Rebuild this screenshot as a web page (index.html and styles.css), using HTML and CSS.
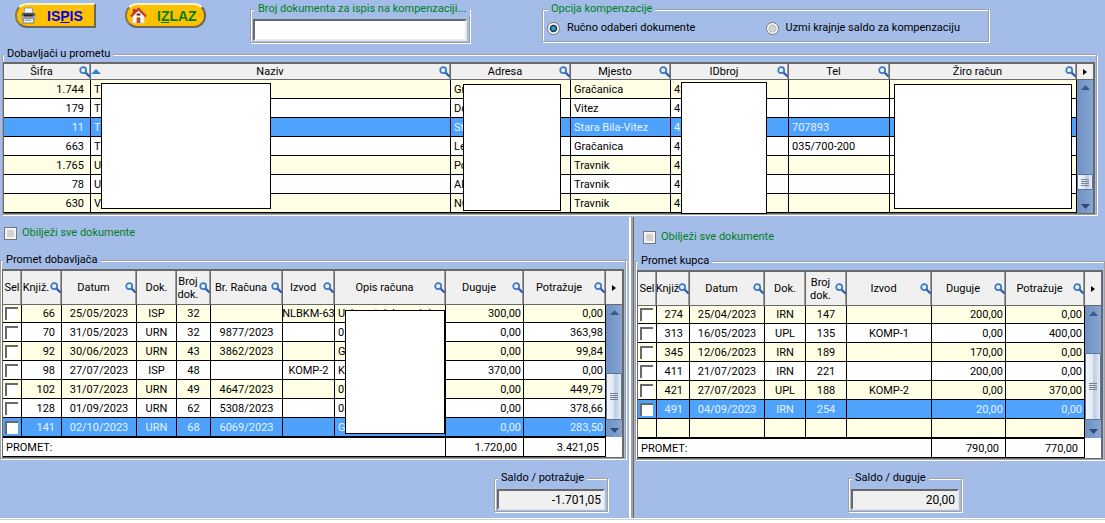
FILE: index.html
```html
<!DOCTYPE html>
<html lang="hr">
<head>
<meta charset="utf-8">
<title>Kompenzacije</title>
<link rel="stylesheet" href="styles.css">
</head>
<body>
<svg class="defs" aria-hidden="true">
  <symbol id="mag" viewBox="0 0 11 11">
    <path d="M6.4 6.4L10 10" stroke="#2f5fae" stroke-width="2.2" stroke-linecap="round"/>
    <circle cx="4.2" cy="4.2" r="3" fill="#e4f2ff" stroke="#3b78c4" stroke-width="1.7"/>
  </symbol>
  <symbol id="up" viewBox="0 0 9 5"><path d="M0 5L4.5 0L9 5Z" fill="#3f5787"/></symbol>
  <symbol id="down" viewBox="0 0 9 5"><path d="M0 0L4.5 5L9 0Z" fill="#2f4675"/></symbol>
</svg>
<main class="app">
  <header class="toolbar">
    <div class="actions">
      <button class="pill print" type="button" accesskey="p">
        <svg viewBox="0 0 18 18" aria-hidden="true">
          <path d="M5 1h8l1 7H4z" fill="#f4f8fc" stroke="#8a98a8"/>
          <path d="M2 7l2-1h10l2 1 1 6H1z" fill="#55585e"/>
          <path d="M1 9h16v4H1z" fill="#a9adb3"/>
          <path d="M4 8h10v2H4z" fill="#222"/>
          <path d="M4 12h10l1 5H3z" fill="#f0f0f0" stroke="#777"/>
          <path d="M5 14h7" stroke="#3a8fd0"/>
        </svg>
        <span>IS<u>P</u>IS</span>
      </button>
      <button class="pill exit" type="button" accesskey="z">
        <svg viewBox="0 0 18 18" aria-hidden="true">
          <path d="M3 2h3v5H3z" fill="#b33"/>
          <path d="M3 9l6-6 6 6v8H3z" fill="#fffaf2" stroke="#d8cbb8"/>
          <path d="M1 10l8-8 8 8" fill="none" stroke="#c9362b" stroke-width="2.4"/>
          <path d="M7 11h4v6H7z" fill="#b0502c"/>
          <path d="M7 7h4v2H7z" fill="#3d2a22"/>
        </svg>
        <span>I<u>Z</u>LAZ</span>
      </button>
    </div>
    <fieldset class="group doc-group">
      <legend class="green"><label for="doc">Broj dokumenta za ispis na kompenzaciji...</label></legend>
      <input class="field" id="doc" type="text">
    </fieldset>
    <fieldset class="group option-group">
      <legend class="green">Opcija kompenzacije</legend>
      <label class="option"><input type="radio" name="opt" checked>Ručno odaberi dokumente</label>
      <label class="option"><input type="radio" name="opt">Uzmi krajnje saldo za kompenzaciju</label>
    </fieldset>
  </header>

  <fieldset class="group suppliers">
    <legend>Dobavljači u prometu</legend>
    <div class="grid">
      <table>
        <colgroup><col class="w87"><col><col class="w120"><col class="w100"><col class="w118"><col class="w101"><col class="w187"></colgroup>
        <thead><tr>
          <th><div class="h"><span>Šifra</span><svg class="mag"><use href="#mag"/></svg></div></th>
          <th><div class="h"><svg class="sort" viewBox="0 0 10 5"><path d="M0 5L5 0L10 5Z" fill="#2f86cf"/></svg><span>Naziv</span><svg class="mag"><use href="#mag"/></svg></div></th>
          <th><div class="h"><span>Adresa</span><svg class="mag"><use href="#mag"/></svg></div></th>
          <th><div class="h"><span>Mjesto</span><svg class="mag"><use href="#mag"/></svg></div></th>
          <th><div class="h"><span>IDbroj</span><svg class="mag"><use href="#mag"/></svg></div></th>
          <th><div class="h"><span>Tel</span><svg class="mag"><use href="#mag"/></svg></div></th>
          <th><div class="h"><span>Žiro račun</span><svg class="mag"><use href="#mag"/></svg></div></th>
        </tr></thead>
        <tbody>
          <tr><td class="n wide">1.744</td><td class="host">T<div class="cover c-name"></div></td><td class="host">Gr<div class="cover c-addr"></div></td><td>Gračanica</td><td class="host">42<div class="cover c-id"></div></td><td></td><td class="host"><div class="cover c-acc"></div></td></tr>
          <tr class="w"><td class="n wide">179</td><td>T</td><td>Do</td><td>Vitez</td><td>42</td><td></td><td></td></tr>
          <tr class="sel"><td class="n wide">11</td><td>T</td><td>St</td><td>Stara Bila-Vitez</td><td>42</td><td>707893</td><td></td></tr>
          <tr class="w"><td class="n wide">663</td><td>T</td><td>Le</td><td>Gračanica</td><td>42</td><td>035/700-200</td><td></td></tr>
          <tr><td class="n wide">1.765</td><td>U</td><td>Po</td><td>Travnik</td><td>42</td><td></td><td></td></tr>
          <tr class="w"><td class="n wide">78</td><td>U</td><td>Al</td><td>Travnik</td><td>42</td><td></td><td></td></tr>
          <tr><td class="n wide">630</td><td>V</td><td>NO</td><td>Travnik</td><td>42</td><td></td><td></td></tr>
        </tbody>
      </table>
      <div class="rail">
        <div class="corner"><svg viewBox="0 0 4 6"><path d="M0 0L4 3L0 6Z"/></svg></div>
        <div class="track"><svg class="arrow"><use href="#up"/></svg><div class="thumb t-top"></div><svg class="arrow"><use href="#down"/></svg></div>
      </div>
    </div>
  </fieldset>

  <div class="panels">
    <section class="panel left">
      <label class="check-all"><input class="box" type="checkbox">Obilježi sve dokumente</label>
      <fieldset class="group">
        <legend>Promet dobavljača</legend>
        <div class="grid tall">
          <table>
            <colgroup><col class="w19"><col class="w40"><col class="w75"><col class="w40"><col class="w34"><col class="w72"><col class="w52"><col><col class="w78"><col class="w82"></colgroup>
            <thead><tr>
              <th><div class="h"><span>Sel</span></div></th>
              <th><div class="h"><span>Knjiž.</span><svg class="mag"><use href="#mag"/></svg></div></th>
              <th><div class="h"><span>Datum</span><svg class="mag"><use href="#mag"/></svg></div></th>
              <th><div class="h"><span>Dok.</span></div></th>
              <th><div class="h"><span>Broj<br>dok.</span><svg class="mag"><use href="#mag"/></svg></div></th>
              <th><div class="h"><span>Br. Računa</span><svg class="mag"><use href="#mag"/></svg></div></th>
              <th><div class="h"><span>Izvod</span><svg class="mag"><use href="#mag"/></svg></div></th>
              <th><div class="h"><span>Opis računa</span><svg class="mag"><use href="#mag"/></svg></div></th>
              <th><div class="h"><span>Duguje</span><svg class="mag"><use href="#mag"/></svg></div></th>
              <th><div class="h"><span>Potražuje</span><svg class="mag"><use href="#mag"/></svg></div></th>
            </tr></thead>
            <tbody>
              <tr><td class="s"><input type="checkbox" aria-label="66"></td><td class="n wide">66</td><td class="c">25/05/2023</td><td class="c">ISP</td><td class="c">32</td><td class="c"></td><td class="c"><div class="clip">NLBKM-63</div></td><td class="host"><div class="desc">Usluge telekom. i dr.</div><div class="cover c-desc"></div></td><td class="n">300,00</td><td class="n">0,00</td></tr>
              <tr class="w"><td class="s"><input type="checkbox" aria-label="70"></td><td class="n wide">70</td><td class="c">31/05/2023</td><td class="c">URN</td><td class="c">32</td><td class="c">9877/2023</td><td class="c"></td><td>05</td><td class="n">0,00</td><td class="n">363,98</td></tr>
              <tr><td class="s"><input type="checkbox" aria-label="92"></td><td class="n wide">92</td><td class="c">30/06/2023</td><td class="c">URN</td><td class="c">43</td><td class="c">3862/2023</td><td class="c"></td><td>G</td><td class="n">0,00</td><td class="n">99,84</td></tr>
              <tr class="w"><td class="s"><input type="checkbox" aria-label="98"></td><td class="n wide">98</td><td class="c">27/07/2023</td><td class="c">ISP</td><td class="c">48</td><td class="c"></td><td class="c">KOMP-2</td><td>K</td><td class="n">370,00</td><td class="n">0,00</td></tr>
              <tr><td class="s"><input type="checkbox" aria-label="102"></td><td class="n wide">102</td><td class="c">31/07/2023</td><td class="c">URN</td><td class="c">49</td><td class="c">4647/2023</td><td class="c"></td><td>07</td><td class="n">0,00</td><td class="n">449,79</td></tr>
              <tr class="w"><td class="s"><input type="checkbox" aria-label="128"></td><td class="n wide">128</td><td class="c">01/09/2023</td><td class="c">URN</td><td class="c">62</td><td class="c">5308/2023</td><td class="c"></td><td>08</td><td class="n">0,00</td><td class="n">378,66</td></tr>
              <tr class="sel"><td class="s"><input type="checkbox" aria-label="141"></td><td class="n wide">141</td><td class="c">02/10/2023</td><td class="c">URN</td><td class="c">68</td><td class="c">6069/2023</td><td class="c"></td><td>G</td><td class="n">0,00</td><td class="n">283,50</td></tr>
            </tbody>
            <tfoot><tr><td colspan="8">PROMET:</td><td class="n wide">1.720,00</td><td class="n wide">3.421,05</td></tr></tfoot>
          </table>
          <div class="rail">
            <div class="corner"><svg viewBox="0 0 4 6"><path d="M0 0L4 3L0 6Z"/></svg></div>
            <div class="track"><svg class="arrow"><use href="#up"/></svg><div class="thumb t-left"></div><svg class="arrow"><use href="#down"/></svg></div>
            <div class="rail-foot"></div>
          </div>
        </div>
      </fieldset>
      <fieldset class="group saldo">
        <legend><label for="s1">Saldo / potražuje</label></legend>
        <input class="field sum" id="s1" type="text" value="-1.701,05" readonly>
      </fieldset>
    </section>
    <div class="splitter"></div>
    <section class="panel right">
      <label class="check-all"><input class="box" type="checkbox">Obilježi sve dokumente</label>
      <fieldset class="group">
        <legend>Promet kupca</legend>
        <div class="grid tall">
          <table>
            <colgroup><col class="w19"><col class="w33"><col class="w75"><col class="w41"><col class="w41"><col><col class="w74"><col class="w79"></colgroup>
            <thead><tr>
              <th><div class="h"><span>Sel</span></div></th>
              <th><div class="h"><span>Knjiž</span><svg class="mag"><use href="#mag"/></svg></div></th>
              <th><div class="h"><span>Datum</span><svg class="mag"><use href="#mag"/></svg></div></th>
              <th><div class="h"><span>Dok.</span></div></th>
              <th><div class="h"><span>Broj<br>dok.</span><svg class="mag"><use href="#mag"/></svg></div></th>
              <th><div class="h"><span>Izvod</span><svg class="mag"><use href="#mag"/></svg></div></th>
              <th><div class="h"><span>Duguje</span><svg class="mag"><use href="#mag"/></svg></div></th>
              <th><div class="h"><span>Potražuje</span><svg class="mag"><use href="#mag"/></svg></div></th>
            </tr></thead>
            <tbody>
              <tr><td class="s"><input type="checkbox" aria-label="274"></td><td class="n wide">274</td><td class="c">25/04/2023</td><td class="c">IRN</td><td class="c">147</td><td class="c"></td><td class="n">200,00</td><td class="n">0,00</td></tr>
              <tr class="w"><td class="s"><input type="checkbox" aria-label="313"></td><td class="n wide">313</td><td class="c">16/05/2023</td><td class="c">UPL</td><td class="c">135</td><td class="c">KOMP-1</td><td class="n">0,00</td><td class="n">400,00</td></tr>
              <tr><td class="s"><input type="checkbox" aria-label="345"></td><td class="n wide">345</td><td class="c">12/06/2023</td><td class="c">IRN</td><td class="c">189</td><td class="c"></td><td class="n">170,00</td><td class="n">0,00</td></tr>
              <tr class="w"><td class="s"><input type="checkbox" aria-label="411"></td><td class="n wide">411</td><td class="c">21/07/2023</td><td class="c">IRN</td><td class="c">221</td><td class="c"></td><td class="n">200,00</td><td class="n">0,00</td></tr>
              <tr><td class="s"><input type="checkbox" aria-label="421"></td><td class="n wide">421</td><td class="c">27/07/2023</td><td class="c">UPL</td><td class="c">188</td><td class="c">KOMP-2</td><td class="n">0,00</td><td class="n">370,00</td></tr>
              <tr class="sel"><td class="s"><input type="checkbox" aria-label="491"></td><td class="n wide">491</td><td class="c">04/09/2023</td><td class="c">IRN</td><td class="c">254</td><td class="c"></td><td class="n">20,00</td><td class="n">0,00</td></tr>
              <tr><td></td><td></td><td></td><td></td><td></td><td></td><td></td><td></td></tr>
            </tbody>
            <tfoot><tr><td colspan="6">PROMET:</td><td class="n wide">790,00</td><td class="n wide">770,00</td></tr></tfoot>
          </table>
          <div class="rail">
            <div class="corner"><svg viewBox="0 0 4 6"><path d="M0 0L4 3L0 6Z"/></svg></div>
            <div class="track"><svg class="arrow"><use href="#up"/></svg><div class="thumb t-right"></div><svg class="arrow"><use href="#down"/></svg></div>
            <div class="rail-foot"></div>
          </div>
        </div>
      </fieldset>
      <fieldset class="group saldo">
        <legend><label for="s2">Saldo / duguje</label></legend>
        <input class="field sum" id="s2" type="text" value="20,00" readonly>
      </fieldset>
    </section>
  </div>
</main>
<div class="status"></div>
</body>
</html>
```

FILE: styles.css
```css
* { box-sizing: border-box; }

body {
  margin: 0;
  background: #fff;
  color: #000;
  font: 11px/14px Roboto, "Liberation Sans", Arial, sans-serif;
}

.defs { display: none; }
.green, .check-all { color: #008020; }

.app { background: #a4bce8; }
.status { margin-top: 1px; border-top: 1px solid #d0d0d0; }

/* etched group boxes */
.group {
  margin: 0;
  min-width: 0;
  padding: 2px 1px 0;
  border: 1px solid #a0a0a0;
  box-shadow: inset 1px 1px 0 #fff, 1px 1px 0 #fff;
}
.group > legend {
  margin-left: 1px;
  padding: 0 3px;
  background: #a4bce8;
  white-space: nowrap;
}

.toolbar {
  display: grid;
  grid-template-columns: 250px 220px 448px 1fr;
  height: 47px;
  align-items: start;
  padding-top: 2px;
}
.actions { display: flex; gap: 29px; padding: 1px 0 0 15px; }
.pill {
  display: flex;
  align-items: center;
  gap: 10px;
  width: 81px;
  height: 25px;
  padding: 0 3px;
  border: 2px solid #6b675c;
  border-top-color: #fff2c4;
  border-left-color: #8b7a4a;
  background: #ffc000;
  font: bold 14px/18px "Liberation Sans", Arial, sans-serif;
}
.pill svg { width: 17px; height: 17px; flex: none; }
.print { color: #0000f0; border-radius: 12px 0 0 12px; }
.exit { color: #008000; border-radius: 12px; }

.doc-group { padding: 3px 2px 1px; }
.option-group { margin-left: 72px; width: 447px; padding: 5px 4px 6px; display: flex; }
.group.doc-group > legend { padding: 0 4px; }
.option { display: flex; align-items: center; gap: 7px; flex: 1; }
.option input {
  appearance: none;
  width: 13px;
  height: 13px;
  margin: 0;
  border: 1px solid #777;
  border-radius: 50%;
  background: radial-gradient(#d4d4d4 30%, #bbb 45%, #fff 60%);
}
.option input:checked { background: radial-gradient(#4cb0e0 8%, #0b3558 42%, #fff 55%); }

.field {
  display: block;
  width: 100%;
  height: 22px;
  margin: 0;
  padding: 0 2px;
  border: 2px solid #e8e8e8;
  border-top-color: #696969;
  border-left-color: #696969;
  background: #fff;
}
.sum {
  height: 21px;
  background: #f0f0f0;
  text-align: right;
  font: 12px/16px Roboto, "Liberation Sans", Arial, sans-serif;
}

/* data grids */
.suppliers { margin: 0 8px 0 2px; padding: 1px 1px 0 0; }
.grid {
  display: flex;
  border: 1px solid #696969;
  border-width: 0 2px 1px 1px;
  background: #fff;
}
table {
  flex: 1;
  width: 0;
  table-layout: fixed;
  border-collapse: separate;
  border-spacing: 0;
}
.w19 { width: 19px; } .w33 { width: 33px; } .w34 { width: 34px; } .w40 { width: 40px; }
.w41 { width: 41px; } .w52 { width: 52px; } .w72 { width: 72px; } .w74 { width: 74px; }
.w75 { width: 75px; } .w78 { width: 78px; } .w79 { width: 79px; } .w82 { width: 82px; }
.w87 { width: 87px; } .w100 { width: 100px; } .w101 { width: 101px; } .w118 { width: 118px; }
.w120 { width: 120px; } .w187 { width: 187px; }

th {
  height: 18px;
  padding: 0;
  border: solid #696969;
  border-width: 2px 1px 1px 0;
  box-shadow: inset -1px 0 0 #9a9a9a;
  background: #f0f0f0;
  font-weight: normal;
  overflow: hidden;
}
.tall th { height: 36px; }
.h { display: flex; align-items: center; justify-content: center; line-height: 13px; }
.h span { flex: 1 1 auto; min-width: 0; display: flex; justify-content: center; text-align: center; white-space: nowrap; }
.mag { width: 11px; height: 11px; flex: none; }
.sort { width: 10px; height: 5px; flex: none; }

td {
  height: 19px;
  padding: 1px 3px 0;
  border: solid #000;
  border-width: 0 1px 1px 0;
  background: #ffffe6;
  white-space: nowrap;
  overflow: hidden;
}
.tall tbody tr:first-child td { height: 18px; }
.w td { background: #fff; }
.sel td { background: #4fa2fc; color: #e6f2ff; }
.n { text-align: right; padding-right: 2px; }
.n.wide { padding-right: 6px; }
.c { text-align: center; padding: 1px 1px 0; }
.clip { display: flex; justify-content: center; }
.s { padding: 0 2px; line-height: 0; }
.s input {
  appearance: none;
  width: 13px;
  height: 13px;
  margin: 0;
  border: solid #696969;
  border-width: 2px 0 0 2px;
  background: #fff;
}
tfoot td { height: 20px; background: #fff; border-top: 1px solid #000; }

/* blank sheets lying over table columns */
.host { position: relative; overflow: visible; }
.desc { overflow: hidden; }
.cover { position: absolute; border: 1px solid #000; background: #fff; z-index: 1; }
.c-name { left: 10px; top: 3px; width: 170px; height: 126px; }
.c-addr { left: 12px; top: 4px; width: 98px; height: 127px; }
.c-id { left: 10px; top: 2px; width: 86px; height: 132px; }
.c-acc { left: 4px; top: 4px; width: 178px; height: 125px; }
.c-desc { left: 10px; top: 5px; width: 100px; height: 124px; }

.rail { width: 16px; display: flex; flex-direction: column; }
.corner {
  height: 18px;
  display: flex;
  align-items: center;
  justify-content: center;
  border: solid #696969;
  border-width: 2px 0 1px;
  background: #f0f0f0;
}
.tall .corner { height: 36px; }
.corner svg { width: 4px; height: 6px; }
.track {
  flex: 1;
  display: flex;
  flex-direction: column;
  align-items: center;
  padding: 5px 0 4px;
  background: linear-gradient(90deg, #6f92c2, #86a5d2);
}
.arrow { width: 9px; height: 5px; flex: none; }
.thumb {
  width: 100%;
  margin: auto 0 11px;
  border: 1px solid #5a76a6;
  border-radius: 1px;
  background:
    repeating-linear-gradient(#77808f 0 1px, transparent 1px 2px) center / 8px 7px no-repeat,
    linear-gradient(90deg, #f2f6fc, #dfe7f2 50%, #b9cae2 55%, #e4ecf7);
}
.t-top { height: 16px; margin-bottom: 14px; }
.t-left { height: 47px; margin-bottom: 8px; }
.t-right { height: 67px; margin-bottom: 9px; }
.rail-foot { height: 20px; background: #fff; }

.panels {
  display: grid;
  grid-template-columns: 629fr 5px 471fr;
  padding-top: 2px;
}
.splitter {
  width: 5px;
  border: solid;
  border-width: 0 1px 0 2px;
  border-color: transparent #696969 transparent #fff;
  background: #a0a0a0;
}
.panel { display: flex; flex-direction: column; padding-bottom: 6px; min-width: 0; }
.left { padding-right: 3px; }
.right { padding-left: 1px; }
.check-all { display: flex; align-items: center; gap: 5px; padding: 9px 4px 13px; align-self: flex-start; }
.right .check-all { padding: 13px 8px 10px; }
.box {
  appearance: none;
  width: 13px;
  height: 13px;
  margin: 0;
  border: 1px solid #777;
  background: #d2d2d2;
  box-shadow: inset 0 0 0 2px #f4f4f4;
}
.saldo { width: 114px; margin: 12px 18px 0 0; padding: 4px 2px 1px; align-self: flex-end; }
.right .saldo { margin: 11px 143px 0 0; }
```
